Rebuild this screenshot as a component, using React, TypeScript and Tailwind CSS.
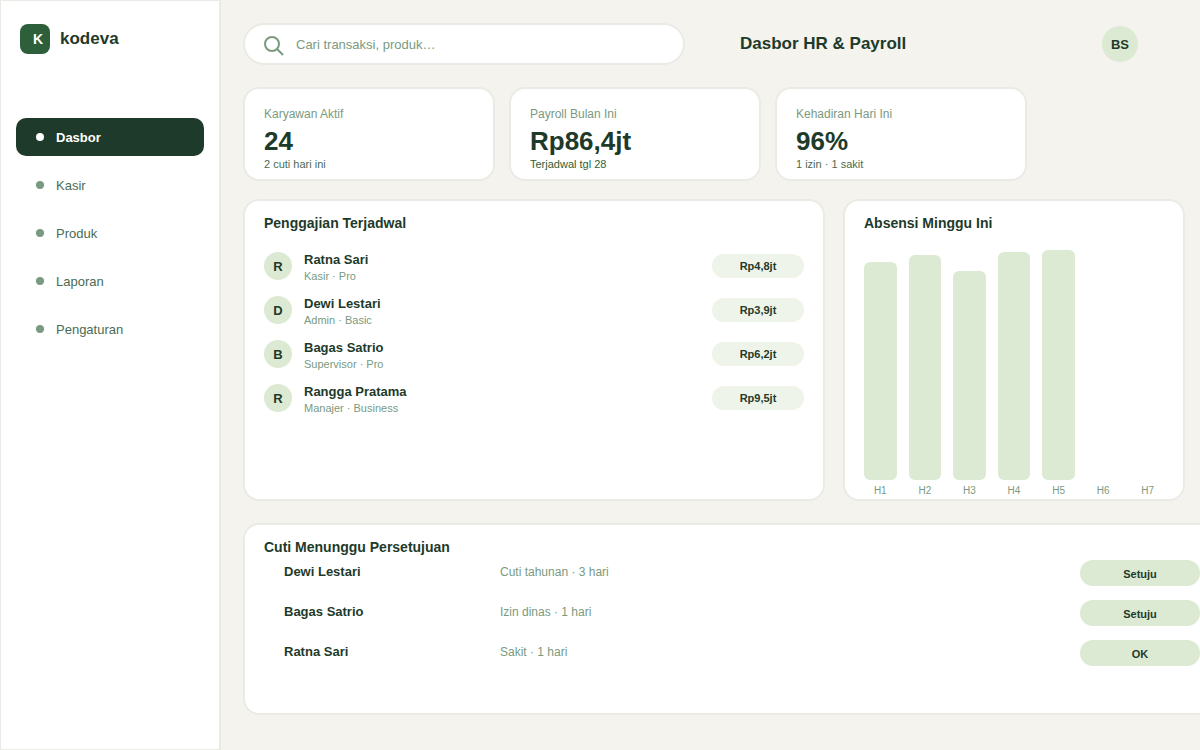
import type { ReactNode } from "react";

const navItems = ["Dasbor", "Kasir", "Produk", "Laporan", "Pengaturan"];

const stats = [
  { label: "Karyawan Aktif", value: "24", note: "2 cuti hari ini", tone: "text-[#4a6b54]" },
  { label: "Payroll Bulan Ini", value: "Rp86,4jt", note: "Terjadwal tgl 28", tone: "text-[#2d5f3a]" },
  { label: "Kehadiran Hari Ini", value: "96%", note: "1 izin · 1 sakit", tone: "text-[#4a6b54]" },
];

const payroll = [
  { name: "Ratna Sari", role: "Kasir · Pro", amount: "Rp4,8jt" },
  { name: "Dewi Lestari", role: "Admin · Basic", amount: "Rp3,9jt" },
  { name: "Bagas Satrio", role: "Supervisor · Pro", amount: "Rp6,2jt" },
  { name: "Rangga Pratama", role: "Manajer · Business", amount: "Rp9,5jt" },
];

const attendance = [
  { day: "H1", height: 218 },
  { day: "H2", height: 225 },
  { day: "H3", height: 209 },
  { day: "H4", height: 228 },
  { day: "H5", height: 230 },
  { day: "H6", height: 0 },
  { day: "H7", height: 0 },
];

const leaves = [
  { name: "Dewi Lestari", detail: "Cuti tahunan · 3 hari", action: "Setuju" },
  { name: "Bagas Satrio", detail: "Izin dinas · 1 hari", action: "Setuju" },
  { name: "Ratna Sari", detail: "Sakit · 1 hari", action: "OK" },
];

function Panel({ title, className, children }: { title: string; className: string; children: ReactNode }) {
  return (
    <section className={`rounded-2xl border-2 border-[#e9ebe4] bg-white px-[19px] pt-[15px] ${className}`}>
      <h2 className="text-[14px] leading-[14px] font-bold">{title}</h2>
      {children}
    </section>
  );
}

function Sidebar() {
  return (
    <aside className="w-[221px] shrink-0 border border-r-2 border-[#e9ebe4] bg-white px-[15px] pt-[23px]">
      <div className="flex items-center gap-2.5 pl-1">
        <div className="flex size-[30px] items-center justify-center rounded-lg bg-[#2d5f3a] pl-1.5 text-[14px] font-bold text-white">
          K
        </div>
        <span className="text-[17px] leading-5 font-bold">kodeva</span>
      </div>
      <nav className="mt-16 flex flex-col gap-2.5">
        {navItems.map((item, i) => (
          <a
            key={item}
            href="#"
            aria-current={i === 0 ? "page" : undefined}
            className={
              i === 0
                ? "flex h-[38px] items-center gap-3 rounded-[10px] bg-[#1e3a2a] px-5 text-[13px] font-bold text-white"
                : "flex h-[38px] items-center gap-3 rounded-[10px] px-5 text-[13px] text-[#4a6b54]"
            }
          >
            <span className={i === 0 ? "size-2 rounded-full bg-white" : "size-2 rounded-full bg-[#7a9a80]"} />
            <span className="pt-0.5 leading-4">{item}</span>
          </a>
        ))}
      </nav>
    </aside>
  );
}

function Header() {
  return (
    <header className="flex items-center">
      <label className="flex h-[42px] w-[442px] items-center rounded-full border-2 border-[#e9ebe4] bg-white px-[19px] text-[#7a9a80]">
        <svg className="h-6 w-5 shrink-0" viewBox="0 -4 20 24" fill="none" stroke="currentColor" strokeWidth="2" aria-hidden="true">
          <circle cx="8" cy="8" r="7" />
          <path d="M13 13l6 6" />
        </svg>
        <input
          type="text"
          aria-label="Cari"
          placeholder="Cari transaksi, produk…"
          className="ml-3 min-w-0 flex-1 bg-transparent pt-0.5 text-[13px] text-[#1e3a2a] outline-none placeholder:text-[#7a9a80]"
        />
      </label>
      <h1 className="ml-[55px] text-[17px] leading-5 font-bold">Dasbor HR &amp; Payroll</h1>
      <div className="mr-[47px] ml-auto flex size-9 items-center justify-center rounded-full bg-[#dce9d3] pt-0.5 text-[13px] font-bold">
        BS
      </div>
    </header>
  );
}

export default function App() {
  return (
    <div className="flex min-h-screen overflow-hidden bg-[#f4f3ee] font-['Liberation_Sans',Arial,sans-serif] text-[#1e3a2a]">
      <Sidebar />
      <main className="min-w-0 flex-1 pt-[23px] pr-[15px] pl-[22px]">
        <Header />

        <div className="mt-[22px] flex gap-3.5">
          {stats.map((s) => (
            <section key={s.label} className="w-[252px] rounded-2xl border-2 border-[#e9ebe4] bg-white px-[19px] pt-[17px] pb-[7px]">
              <h2 className="text-[12px] leading-4 text-[#7a9a80]">{s.label}</h2>
              <p className="mt-1 text-[26px] leading-[30px] font-bold">{s.value}</p>
              <p className={`text-[11px] leading-4 ${s.tone}`}>{s.note}</p>
            </section>
          ))}
        </div>

        <div className="mt-[18px] flex gap-[18px]">
          <Panel title="Penggajian Terjadwal" className="min-w-0 flex-1">
            <ul className="mt-[22px] flex flex-col gap-3">
              {payroll.map((p) => (
                <li key={p.name} className="flex items-start">
                  <span className="flex size-7 items-center justify-center rounded-full bg-[#dce9d3] pt-0.5 text-[13px] font-bold">
                    {p.name[0]}
                  </span>
                  <div className="ml-3">
                    <p className="text-[13px] leading-4 font-bold">{p.name}</p>
                    <p className="text-[11px] leading-4 text-[#7a9a80]">{p.role}</p>
                  </div>
                  <span className="mt-0.5 ml-auto w-[92px] rounded-full bg-[#eef4e9] text-center text-[11px] leading-6 font-bold">
                    {p.amount}
                  </span>
                </li>
              ))}
            </ul>
          </Panel>

          <Panel title="Absensi Minggu Ini" className="w-[342px] shrink-0 pb-0.5">
            <div className="mt-5 grid grid-cols-7 gap-x-3">
              {attendance.map((a) => (
                <div key={a.day} className="flex h-[247px] flex-col justify-end">
                  <div className="rounded-md bg-[#dce9d3]" style={{ height: a.height }} />
                  <span className="mt-[5px] text-center text-[10px] leading-3 text-[#7a9a80]">{a.day}</span>
                </div>
              ))}
            </div>
          </Panel>
        </div>

        <Panel title="Cuti Menunggu Persetujuan" className="mt-[22px] -mr-9 pb-[39px]">
          <table className="w-full table-fixed">
            <tbody>
              {leaves.map((l) => (
                <tr key={l.name} className="h-10 align-top">
                  <th scope="row" className="w-[236px] pt-2 pl-5 text-left text-[13px] leading-5 font-bold">
                    {l.name}
                  </th>
                  <td className="pt-2 text-[12px] leading-5 text-[#7a9a80]">{l.detail}</td>
                  <td className="w-[120px] pt-1.5">
                    <button type="button" className="block h-[26px] w-full rounded-full bg-[#dce9d3] pt-0.5 text-[11px] font-bold">
                      {l.action}
                    </button>
                  </td>
                </tr>
              ))}
            </tbody>
          </table>
        </Panel>
      </main>
    </div>
  );
}
